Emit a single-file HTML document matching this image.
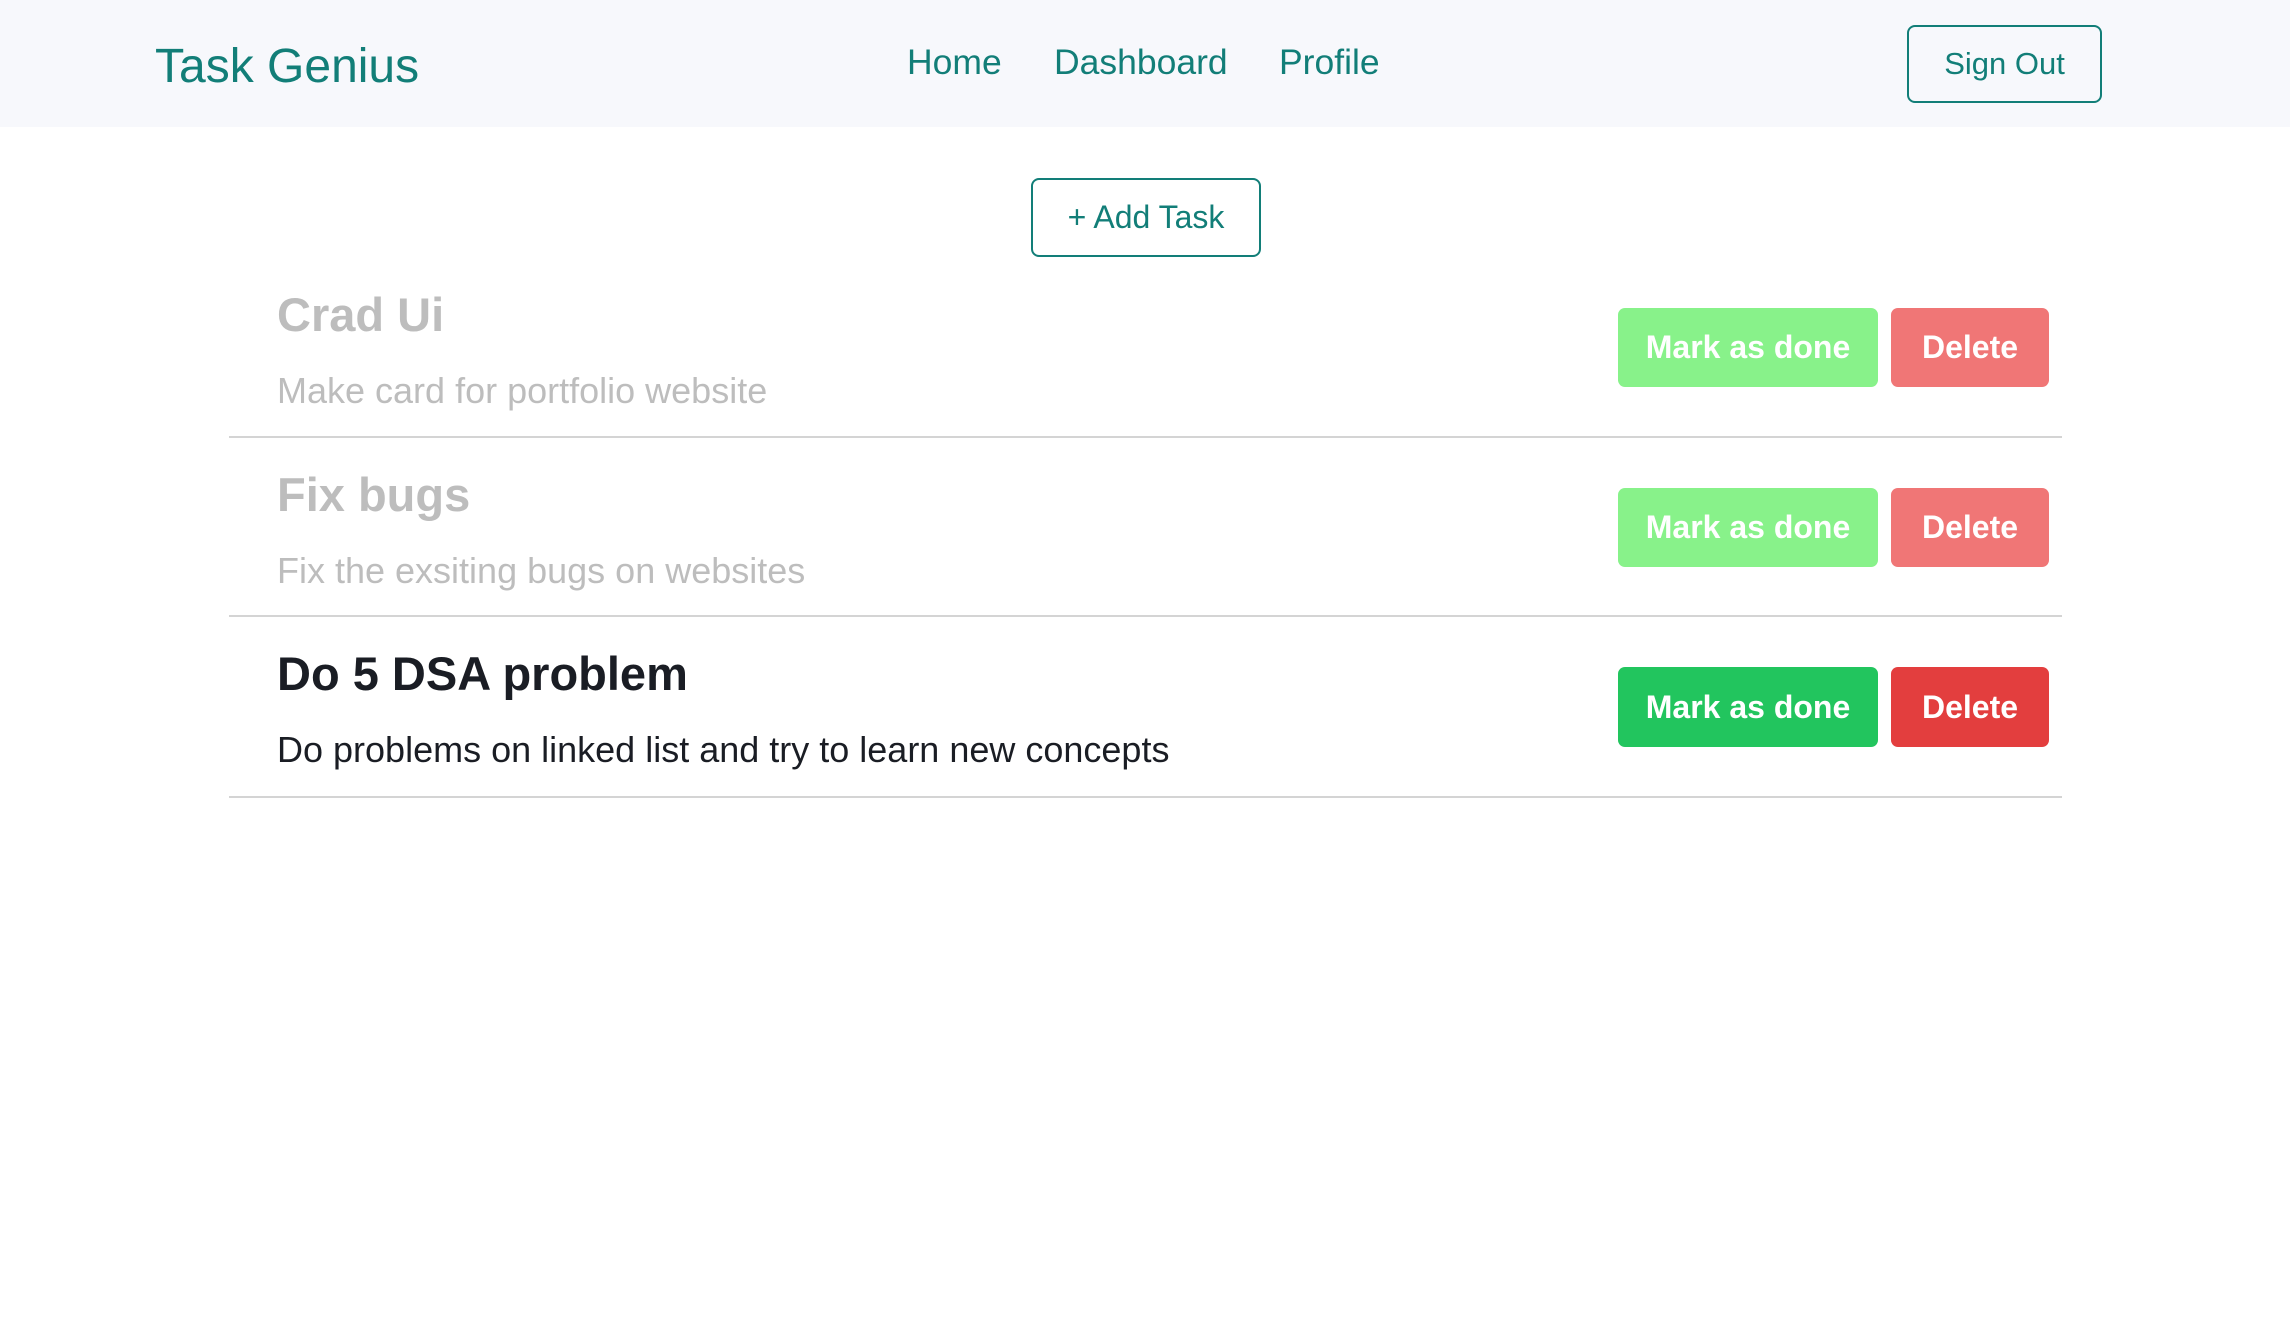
<!DOCTYPE html>
<html><head><meta charset="utf-8"><style>
*{margin:0;padding:0;box-sizing:border-box}
body{width:2290px;height:1334px;background:#fff;font-family:"Liberation Sans",sans-serif;position:relative;overflow:hidden}
.hdr{position:absolute;left:0;top:0;width:2290px;height:127px;background:#f7f8fc}
.a{position:absolute;white-space:nowrap}
.teal{color:#127e78}
.btn{position:absolute;border-radius:7px;color:#fff;font-weight:bold;font-size:32px;display:flex;align-items:center;justify-content:center}
.line{position:absolute;left:229px;width:1833px;height:2px;background:#d4d4d4}
</style></head><body>
<div class="hdr"></div>
<div class="a teal" style="left:155px;top:39px;font-size:48px">Task Genius</div>
<div class="a teal" style="left:907px;top:42px;font-size:35.5px">Home</div>
<div class="a teal" style="left:1054px;top:42px;font-size:35.5px">Dashboard</div>
<div class="a teal" style="left:1279px;top:42px;font-size:35.5px">Profile</div>
<div class="a teal" style="left:1907px;top:25px;width:195px;height:78px;border:2px solid #127e78;border-radius:8px;font-size:31px;display:flex;align-items:center;justify-content:center">Sign Out</div>
<div class="a teal" style="left:1031px;top:178px;width:230px;height:79px;border:2px solid #127e78;border-radius:8px;font-size:32px;display:flex;align-items:center;justify-content:center">+ Add Task</div>

<div class="a" style="left:277px;top:287px;font-size:47px;font-weight:bold;color:#bdbdbd">Crad Ui</div>
<div class="a" style="left:277px;top:370px;font-size:36px;color:#bdbdbd">Make card for portfolio website</div>
<div class="btn" style="left:1618px;top:308px;width:260px;height:79px;background:#88f28a">Mark as done</div>
<div class="btn" style="left:1891px;top:308px;width:158px;height:79px;background:#f07676">Delete</div>
<div class="line" style="top:436px"></div>

<div class="a" style="left:277px;top:467px;font-size:47px;font-weight:bold;color:#bdbdbd">Fix bugs</div>
<div class="a" style="left:277px;top:550px;font-size:36px;color:#bdbdbd">Fix the exsiting bugs on websites</div>
<div class="btn" style="left:1618px;top:488px;width:260px;height:79px;background:#88f28a">Mark as done</div>
<div class="btn" style="left:1891px;top:488px;width:158px;height:79px;background:#f07676">Delete</div>
<div class="line" style="top:615px"></div>

<div class="a" style="left:277px;top:646px;font-size:47px;font-weight:bold;color:#1a1d24">Do 5 DSA problem</div>
<div class="a" style="left:277px;top:729px;font-size:36px;color:#1a1d24">Do problems on linked list and try to learn new concepts</div>
<div class="btn" style="left:1618px;top:667px;width:260px;height:80px;background:#22c55e">Mark as done</div>
<div class="btn" style="left:1891px;top:667px;width:158px;height:80px;background:#e33e3e">Delete</div>
<div class="line" style="top:796px"></div>
</body></html>
